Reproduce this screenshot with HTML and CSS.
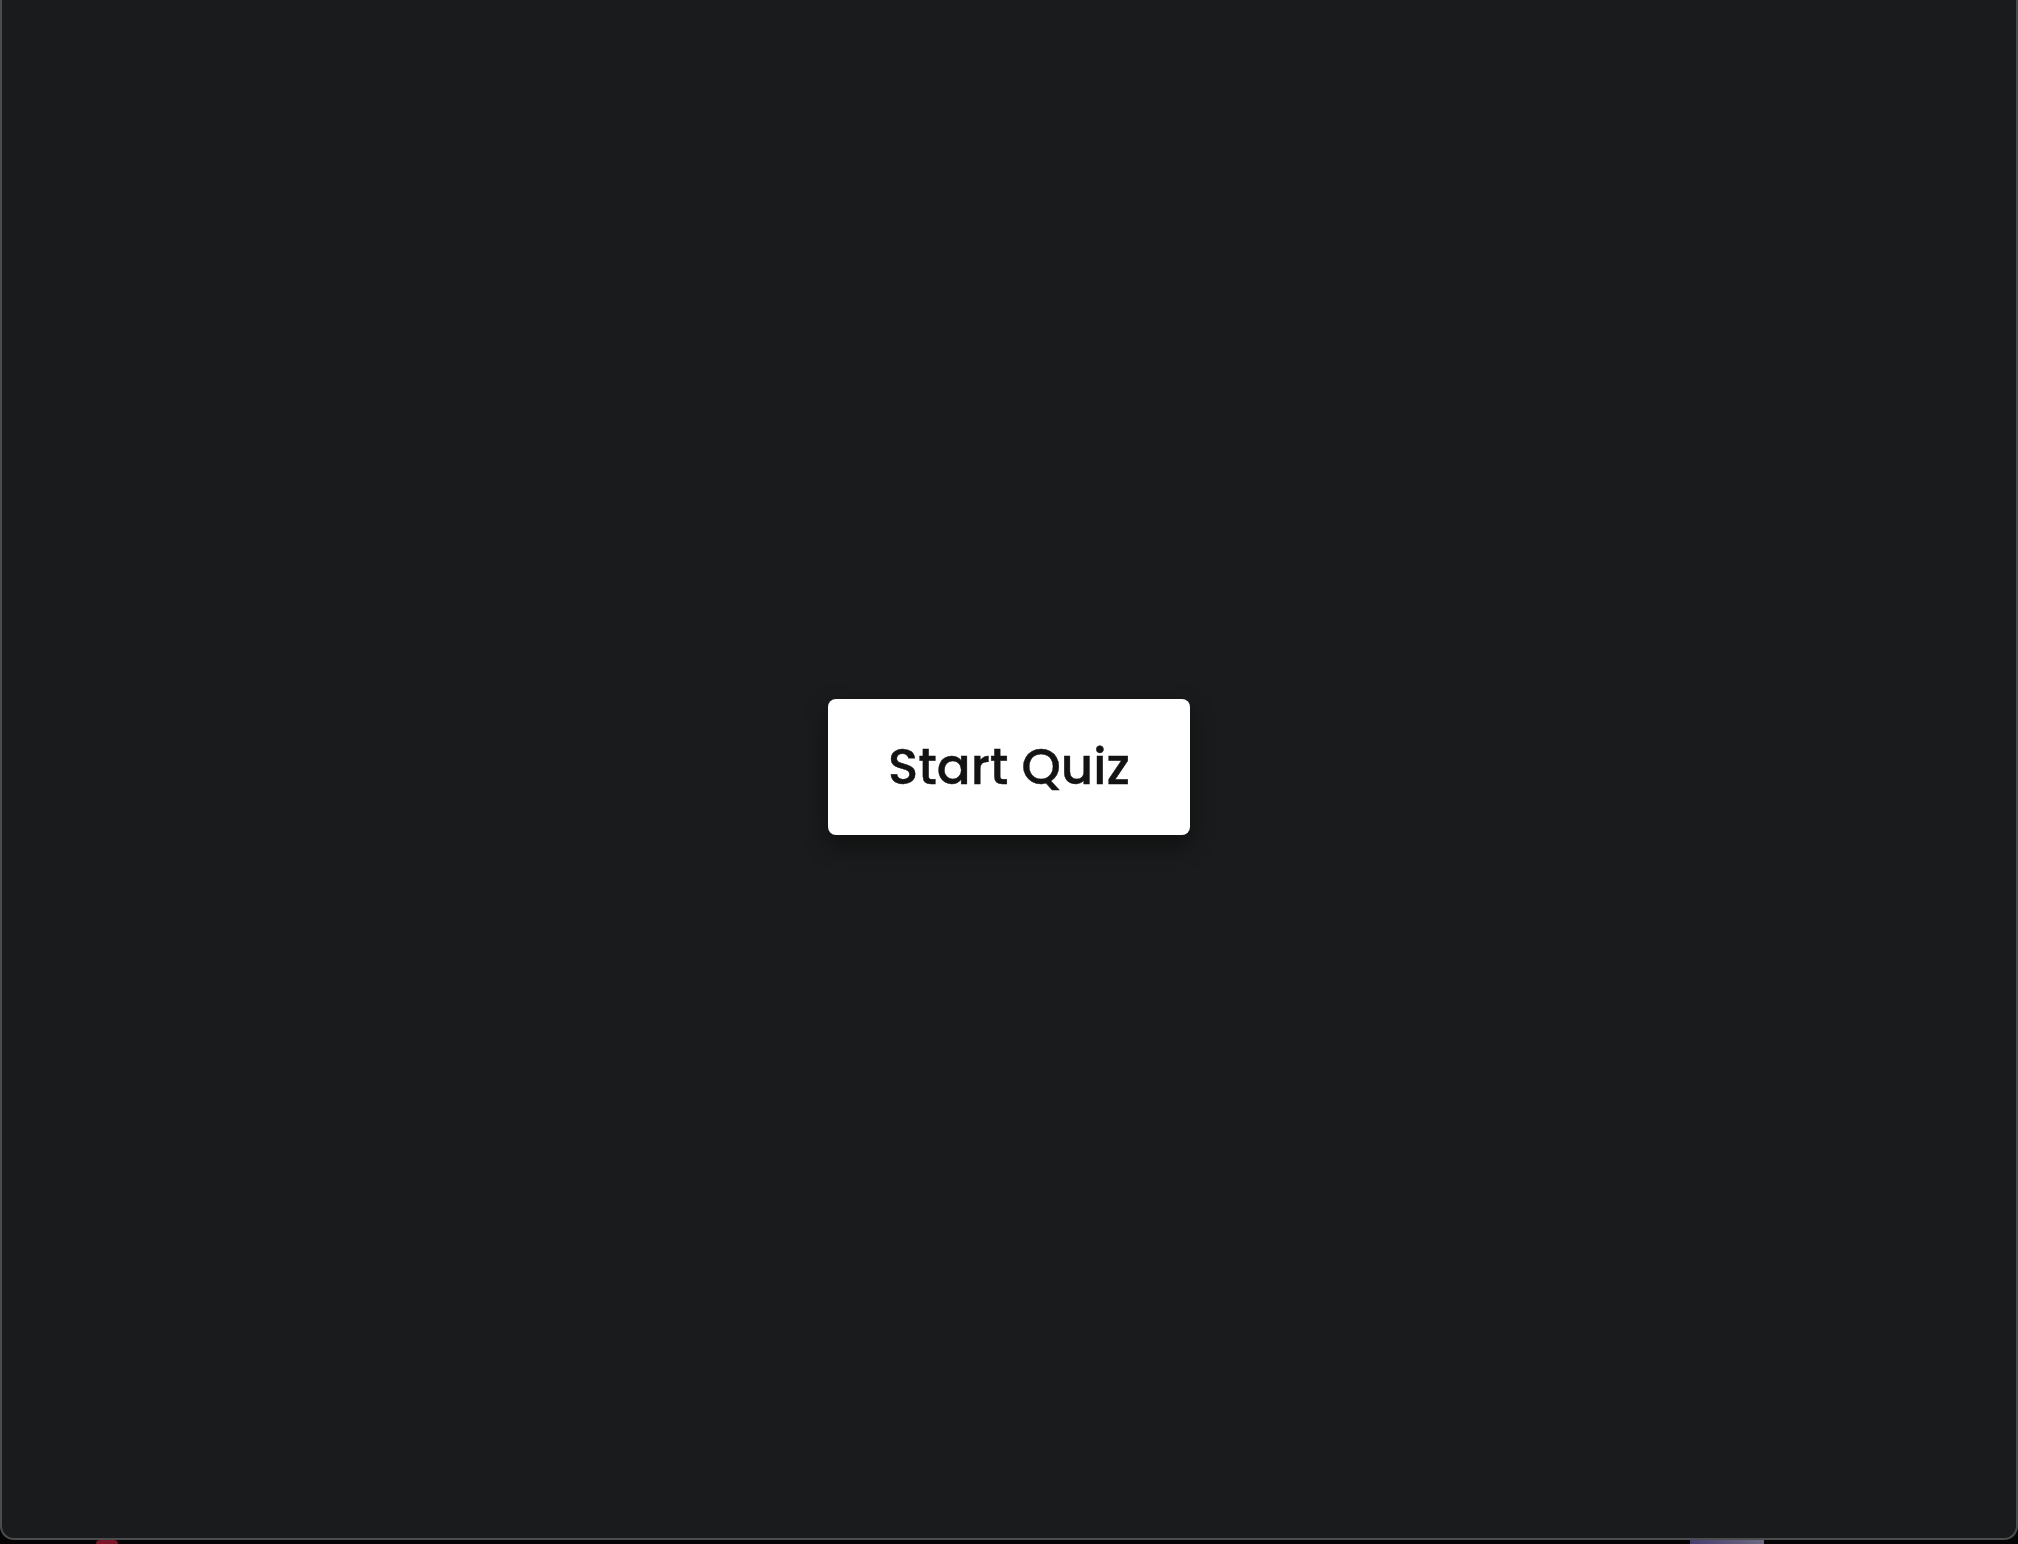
FILE: index.html
```html
<!DOCTYPE html>
<html lang="en">
<head>
<meta charset="utf-8">
<title>Quiz</title>
<link rel="stylesheet" href="styles.css">
</head>
<body>
<div class="window">
  <main class="stage">
    <button class="start-btn" type="button">Start Quiz</button>
  </main>
</div>
<div class="wallpaper">
  <span class="blob-red"></span>
  <span class="blob-purple"></span>
</div>
</body>
</html>
```
FILE: styles.css
```css
html, body {
  margin: 0;
  padding: 0;
  background: #050304;
  width: 2018px;
  height: 1544px;
  overflow: hidden;
}
.window {
  box-sizing: border-box;
  width: 2018px;
  height: 1540px;
  background: #1a1b1c;
  border: 2px solid #4b4c4d;
  border-top: none;
  border-radius: 0 0 14px 14px;
  display: flex;
}
.stage {
  flex: 1;
  display: flex;
  align-items: center;
  justify-content: center;
  padding-bottom: 4px;
}
.start-btn {
  width: 362px;
  height: 136px;
  background: #ffffff;
  border: none;
  border-radius: 8px;
  box-shadow: 0 10px 24px rgba(0, 0, 0, 0.45);
  font-family: "Poppins", Inter, "Noto Sans", sans-serif;
  font-weight: 500;
  font-size: 50px;
  color: #131313;
  -webkit-text-stroke: 0.4px #131313;
  cursor: pointer;
  padding: 0;
}
.wallpaper {
  height: 4px;
  display: flex;
}
.blob-red {
  margin-left: 96px;
  width: 22px;
  height: 4px;
  border-radius: 10px 10px 0 0;
  background: #7a1426;
}
.blob-purple {
  margin-left: 1572px;
  width: 74px;
  height: 4px;
  background: linear-gradient(90deg, #4a3d6e, #6c6a80);
}
```
